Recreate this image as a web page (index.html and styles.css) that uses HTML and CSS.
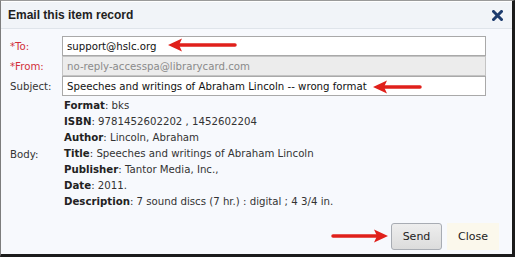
FILE: index.html
```html
<!DOCTYPE html>
<html>
<head>
<meta charset="utf-8">
<link rel="stylesheet" href="styles.css">
</head>
<body>
<div class="dialog">
  <div class="titlebar">
    <span class="title">Email this item record</span>
    <svg class="close-x" width="11" height="11" viewBox="0 0 11 11"><path d="M1.5 1.5 L9.5 9.5 M9.5 1.5 L1.5 9.5" stroke="#1d3c6e" stroke-width="3" stroke-linecap="square"/></svg>
  </div>
  <div class="content">
    <div class="row">
      <label class="lbl req">*To:</label>
      <div class="field">support@hslc.org</div>
    </div>
    <div class="row">
      <label class="lbl req">*From:</label>
      <div class="field disabled">no-reply-accesspa@librarycard.com</div>
    </div>
    <div class="row">
      <label class="lbl">Subject:</label>
      <div class="field">Speeches and writings of Abraham Lincoln -- wrong format</div>
    </div>
    <div class="body-row">
      <label class="lbl body-lbl">Body:</label>
      <div class="body-text">
        <div><b>Format</b>: bks</div>
        <div><b>ISBN</b>: 9781452602202 , 1452602204</div>
        <div><b>Author</b>: Lincoln, Abraham</div>
        <div><b>Title</b>: Speeches and writings of Abraham Lincoln</div>
        <div><b>Publisher</b>: Tantor Media, Inc.,</div>
        <div><b>Date</b>: 2011.</div>
        <div><b>Description</b>: 7 sound discs (7 hr.) : digital ; 4 3/4 in.</div>
      </div>
    </div>
    <div class="buttons">
      <button class="btn send">Send</button>
      <button class="btn close">Close</button>
    </div>
  </div>
  <svg class="arrow arrow-to" width="70" height="14" viewBox="0 0 70 14"><path d="M12 7 H68" stroke="#e0201b" stroke-width="3.5" stroke-linecap="round"/><path d="M1 7 L15 0.5 L12 7 L15 13.5 Z" fill="#e0201b"/></svg>
  <svg class="arrow arrow-subj" width="50" height="14" viewBox="0 0 50 14"><path d="M12 7 H48" stroke="#e0201b" stroke-width="3.5" stroke-linecap="round"/><path d="M1 7 L15 0.5 L12 7 L15 13.5 Z" fill="#e0201b"/></svg>
  <svg class="arrow arrow-send" width="58" height="14" viewBox="0 0 58 14"><path d="M2 7 H46" stroke="#e0201b" stroke-width="3.5" stroke-linecap="round"/><path d="M57 7 L43 0.5 L46 7 L43 13.5 Z" fill="#e0201b"/></svg>
</div>
</body>
</html>
```
FILE: styles.css
```css
html, body {
  margin: 0;
  padding: 0;
  background: #ffffff;
}
.dialog {
  position: relative;
  box-sizing: border-box;
  width: 515px;
  height: 257px;
  border-top: 1px solid #9a9a9a;
  border-left: 1px solid #7d7d7d;
  border-right: 3px solid #1b1b1b;
  border-bottom: 3px solid #1b1b1b;
  background: #f7f9fd;
  font-family: "DejaVu Sans", Verdana, sans-serif;
  font-size: 10.2px;
  color: #222;
  display: flex;
  flex-direction: column;
}
.titlebar {
  height: 28px;
  box-sizing: border-box;
  border-top: 1px solid #ffffff;
  border-bottom: 1px solid #dfe4ea;
  background: #f1f4f8;
  display: flex;
  align-items: center;
  justify-content: space-between;
  padding: 0 9px 0 7px;
}
.title {
  font-family: "Liberation Sans", Arial, sans-serif;
  font-weight: bold;
  font-size: 12px;
  color: #222;
}
.close-x {
  display: block;
}
.content {
  flex: 1;
  padding: 7px 26px 0 9px;
  display: flex;
  flex-direction: column;
}
.row {
  display: flex;
  align-items: center;
  height: 20px;
}
.lbl {
  width: 52px;
  flex: none;
  color: #333;
}
.req {
  color: #d2303a;
}
.field {
  flex: 1;
  height: 20px;
  box-sizing: border-box;
  border: 1px solid #a9a9a9;
  background: #ffffff;
  padding: 0 4px;
  display: flex;
  align-items: center;
  color: #111;
  white-space: nowrap;
}
.field.disabled {
  background: #ececec;
  color: #8a8a8a;
  border-color: #c4c4c4;
}
.body-row {
  display: flex;
  align-items: center;
  margin-top: 2px;
}
.body-lbl {
  color: #333;
}
.body-text {
  line-height: 16px;
  color: #333;
  padding-left: 2px;
}
.body-text b {
  color: #222;
}
.buttons {
  display: flex;
  justify-content: flex-end;
  gap: 5px;
  margin-top: 13px;
  margin-right: -13px;
}
.btn {
  font-family: "DejaVu Sans", Verdana, sans-serif;
  font-size: 11px;
  height: 27px;
  padding: 0 10px;
  color: #222;
}
.send {
  width: 51px;
  border: 1px solid #a8acb3;
  border-radius: 3px;
  background: linear-gradient(#eeeeee, #dcdcdc);
}
.close {
  width: 52px;
  border: none;
  background: #fbf8ec;
}
.arrow {
  position: absolute;
}
.arrow-to {
  left: 166px;
  top: 37px;
}
.arrow-subj {
  left: 371px;
  top: 79px;
}
.arrow-send {
  left: 330px;
  top: 228px;
}
```
